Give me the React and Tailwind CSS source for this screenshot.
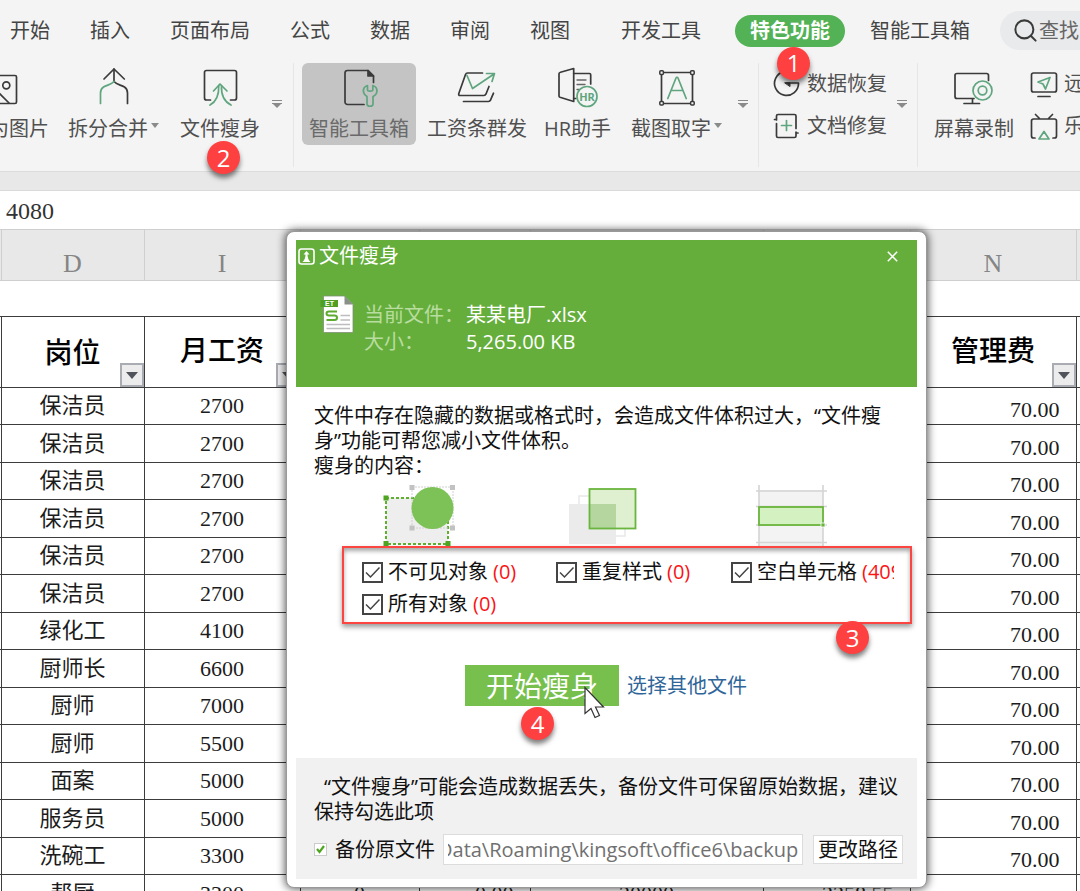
import React, { useLayoutEffect, useRef } from "react";
import { Search } from "lucide-react";

const INK = "#3a3a3a";
const GREEN = "#5fa57e";

function Icon({ size = 48, children }) {
  return (
    <svg
      width={size}
      height={size}
      viewBox={`0 0 ${size} ${size}`}
      fill="none"
      stroke={INK}
      strokeWidth="1.7"
      strokeLinecap="round"
      strokeLinejoin="round"
      aria-hidden="true"
      className="shrink-0"
    >
      {children}
    </svg>
  );
}

const PictureIcon = () => (
  <Icon>
    <rect x="8.5" y="11.5" width="33" height="28" rx="1.5" />
    <circle cx="31.3" cy="21.3" r="3.5" />
    <path d="M9 36 19 24 34 39" />
  </Icon>
);

const SplitIcon = () => (
  <Icon>
    <path d="M24 5v12.5c3 3.500 7 3.200 10.500 5.500 2 1.400 3 3.300 3 6V39.500" />
    <path d="M14 15 24 5l10.300 10" />
    <path d="M24 17.500c-3 3.500-7 3.200-10.500 5.500-2 1.400-3 3.300-3 6V39.500" stroke={GREEN} />
  </Icon>
);

const SlimIcon = () => (
  <Icon>
    <path d="M14.500 36H10.500a2 2 0 0 1-2-2V8.500a2 2 0 0 1 2-2h28a2 2 0 0 1 2 2V34a2 2 0 0 1-2 2H34.500" />
    <g stroke={GREEN}>
      <path d="M17.500 27 24 20l7 7" />
      <path d="M22.800 21.500C23 31 20 38 14 41M25.500 21.500C25 31 29 38 35 41" />
    </g>
  </Icon>
);

const ToolboxIcon = () => (
  <Icon>
    <path d="M29 40.500H12.500a2.500 2.500 0 0 1-2.500-2.500V9a2.500 2.500 0 0 1 2.500-2.500H33l5.500 5.500v6.500" />
    <path d="M33 6.500v5.500h5.500z" fill={INK} />
    <path
      d="M32.500 21.500c-3 1-4.500 3.500-4 6.500.4 2.200 2 3.700 3.500 4.500V40c0 3 6 3 6 0v-7.500c2-.8 3.500-2.300 3.800-4.500.5-3-1-5.500-4-6.500V26c0 1.500-5.300 1.500-5.300 0z"
      stroke={GREEN}
    />
  </Icon>
);

const SendIcon = () => (
  <Icon>
    <path d="M29.500 9H14.500c-1 0-1.600.4-2 1.500L5.800 29.500c-.4 1.200.1 2 1.200 2H31c.9 0 1.500-.4 1.900-1.300L36 22.500" />
    <path d="M10.500 37.500H35.500c1 0 1.600-.4 2-1.300l3-7" />
    <path d="M14 11.500l5.500 13L41 10M33.500 9.500h8l-2.500 8" stroke={GREEN} />
  </Icon>
);

const HrIcon = () => (
  <Icon>
    <path d="M6.500 8.200 19.700 4.500V37.500L6 33.300c-.8-.3-1-.7-1-1.300V9.800c0-.8.5-1.300 1.500-1.600z" />
    <path d="M19.700 9.500H35.500a1.200 1.200 0 0 1 1.200 1.200V20M19.700 34.500h2" />
    <path d="M23 16h9M23 20.500h8M23 25.500h2" strokeWidth="1.300" stroke="#666" />
    <circle cx="33" cy="32.500" r="10" fill="#f4f4f4" stroke={GREEN} />
    <text x="33" y="36.500" textAnchor="middle" fontSize="11" fontWeight="700" fontFamily="Noto Sans, sans-serif" fill={GREEN} stroke="none">
      HR
    </text>
  </Icon>
);

const CaptureIcon = () => (
  <Icon>
    <path d="M11 8.500h26M11 39.500h26M8.500 11v26M39.500 11v26" />
    <g strokeWidth="1.500">
      <rect x="6.800" y="6.800" width="3.600" height="3.600" rx="1" />
      <rect x="37.600" y="6.800" width="3.600" height="3.600" rx="1" />
      <rect x="6.800" y="37.400" width="3.600" height="3.600" rx="1" />
      <rect x="37.600" y="37.400" width="3.600" height="3.600" rx="1" />
    </g>
    <path d="M14.800 34.500 23 14c.4-1 1.600-1 2 0l8.200 20.500M18 26.500h12" stroke={GREEN} />
  </Icon>
);

const RecordIcon = () => (
  <Icon>
    <path d="M24 34.500H7a2 2 0 0 1-2-2v-21a2 2 0 0 1 2-2H36.500a2 2 0 0 1 2 2V16.500M22.500 34.500V39M14 39.500H29.500" />
    <circle cx="32.500" cy="26.500" r="9.500" stroke={GREEN} />
    <circle cx="32.500" cy="26.500" r="4.300" stroke={GREEN} />
  </Icon>
);

const RestoreIcon = () => (
  <Icon size={28}>
    <path d="M21 4A12 12 0 1 0 25.500 13H13" />
    <path d="M12 12.800h5v3.400z" fill={INK} strokeWidth="1" />
  </Icon>
);

const RepairIcon = () => (
  <Icon size={28}>
    <path d="M3.500 8V4a1.500 1.500 0 0 1 1.500-1.500H21.500A1.500 1.500 0 0 1 23 4V16.500M23 20v4a1.500 1.500 0 0 1-1.500 1.500H5A1.500 1.500 0 0 1 3.500 24V11.500M1.500 7.500h2M23 21h2" />
    <path d="M13.500 8.500v10M8.500 13.500h10" stroke={GREEN} />
  </Icon>
);

const RemoteIcon = () => (
  <Icon size={28}>
    <rect x="1.500" y="3" width="25" height="19" rx="2" />
    <path d="M8 26.500h12" />
    <path d="M8 12 20 7.500 15.500 19 13 14z" stroke={GREEN} />
  </Icon>
);

const TvIcon = () => (
  <Icon size={28}>
    <path d="M5 26H3.500a2 2 0 0 1-2-2V9a2 2 0 0 1 2-2h21a2 2 0 0 1 2 2V24a2 2 0 0 1-2 2H23M5.500 2.500 9.500 6.500M22.500 2.500 18.500 6.500" />
    <path d="M14 19.500 19 27H9z" stroke={GREEN} />
  </Icon>
);

function Badge({ n, className }) {
  return (
    <span
      className={`absolute z-20 flex size-[33px] items-center justify-center rounded-full bg-[#ff4040] text-2xl leading-none font-medium text-white shadow-[0_4px_5px_rgba(0,0,0,0.5)] ${className}`}
    >
      {n}
    </span>
  );
}

function Caret() {
  return <span className="mb-2 border-x-[4px] border-t-[5px] border-x-transparent border-t-[#8a8a8a]" />;
}

function GroupMenu({ className }) {
  return (
    <button type="button" aria-label="更多" className={`mt-[37px] flex h-2 shrink-0 flex-col items-center justify-between ${className}`}>
      <span className="h-px w-2.5 bg-[#8a8a8a]" />
      <span className="mt-[2px] h-px w-2.5 bg-[#8a8a8a]" />
      <span className="border-x-[5px] border-t-[5px] border-x-transparent border-t-[#8a8a8a]" />
    </button>
  );
}

function Divider({ className }) {
  return <span className={`h-[104px] w-px shrink-0 bg-[#e6e6e6] ${className}`} />;
}

function RibbonButton({ icon, label, caret, active, className, children }) {
  return (
    <button
      type="button"
      className={`relative flex h-[82px] shrink-0 flex-col items-center rounded-md ${active ? "bg-[#c4c4c4] px-[7px] text-[#6a6a6a]" : ""} ${className}`}
    >
      <span className="flex h-[50px] items-center">{icon}</span>
      <span className="flex items-center gap-[3px] leading-8">
        {label}
        {caret && <Caret />}
      </span>
      {children}
    </button>
  );
}

function SmallButton({ icon, label }) {
  return (
    <button type="button" className="flex h-[42px] items-center gap-1.5">
      {icon}
      {label}
    </button>
  );
}

const tabs = ["开始", "插入", "页面布局", "公式", "数据", "审阅", "视图"];

function Ribbon() {
  return (
    <header className="border-b border-[#dcdcdc] bg-[#f4f4f4] text-xl whitespace-nowrap text-[#505050]">
      <nav className="flex h-[63px] items-center pb-0.5 pl-2.5 text-[#444]">
        <div className="flex shrink-0 gap-10">
          {tabs.map((t) => (
            <button type="button" key={t}>
              {t}
            </button>
          ))}
        </div>
        <button type="button" className="ml-[51px] shrink-0">
          开发工具
        </button>
        <button type="button" className="relative ml-[34px] h-8 shrink-0 rounded-full bg-[#53b156] px-[15px] font-bold text-white">
          特色功能
          <Badge n={1} className="top-[32px] left-[42px]" />
        </button>
        <button type="button" className="ml-[25px] shrink-0">
          智能工具箱
        </button>
        <button type="button" className="ml-[30px] flex h-[39px] min-w-[120px] shrink-0 items-center rounded-full bg-[#e9eaeb] pl-3 text-[#666]">
          <Search size={27} strokeWidth={1.8} color="#3a3a3a" />
          查找
        </button>
      </nav>
      <div className="flex h-[108px] items-start">
        <RibbonButton icon={<PictureIcon />} label="输出为图片" className="-ml-[51px]" />
        <RibbonButton icon={<SplitIcon />} label="拆分合并" caret className="ml-[19px]" />
        <RibbonButton icon={<SlimIcon />} label="文件瘦身" className="ml-[21px]">
          <Badge n={2} className="top-[78px] left-[27px]" />
        </RibbonButton>
        <GroupMenu className="ml-3" />
        <Divider className="ml-[11px]" />
        <RibbonButton icon={<ToolboxIcon />} label="智能工具箱" active className="ml-2" />
        <RibbonButton icon={<SendIcon />} label="工资条群发" className="ml-[11px]" />
        <RibbonButton icon={<HrIcon />} label="HR助手" className="ml-[17px]" />
        <RibbonButton icon={<CaptureIcon />} label="截图取字" caret className="ml-5" />
        <GroupMenu className="ml-4" />
        <Divider className="ml-[10px]" />
        <div className="ml-[14px] shrink-0">
          <SmallButton icon={<RestoreIcon />} label="数据恢复" />
          <SmallButton icon={<RepairIcon />} label="文档修复" />
        </div>
        <GroupMenu className="ml-2.5" />
        <Divider className="ml-[10px]" />
        <RibbonButton icon={<RecordIcon />} label="屏幕录制" className="ml-4" />
        <div className="ml-4 shrink-0">
          <SmallButton icon={<RemoteIcon />} label="远程桌面" />
          <SmallButton icon={<TvIcon />} label="乐播投屏" />
        </div>
      </div>
    </header>
  );
}

const rows = [
  ["保洁员", "2700"],
  ["保洁员", "2700"],
  ["保洁员", "2700"],
  ["保洁员", "2700"],
  ["保洁员", "2700"],
  ["保洁员", "2700"],
  ["绿化工", "4100"],
  ["厨师长", "6600"],
  ["厨师", "7000"],
  ["厨师", "5500"],
  ["面案", "5000"],
  ["服务员", "5000"],
  ["洗碗工", "3300"],
  ["帮厨", "3300", "0", "0.00", "20000", "2258.55"],
];

function FilterButton() {
  return (
    <button
      type="button"
      aria-label="筛选"
      className="absolute right-0 bottom-0 flex size-6 items-center justify-center border-2 border-[#a9adb3] bg-[#ececec]"
    >
      <span className="border-x-[6px] border-t-[7px] border-x-transparent border-t-[#50545a]" />
    </button>
  );
}

function Sheet() {
  const cell = "border border-[#3c3c3c] p-0";
  const letter = "border-x border-b border-[#cfcfcf] p-0 pt-[17px] font-normal";
  return (
    <table className="w-full table-fixed border-collapse font-['Liberation_Serif','Noto_Sans_CJK_SC',serif] text-[22px] leading-7 text-[#1c1c1c]">
      <colgroup>
        <col className="w-px" />
        <col className="w-[143px]" />
        <col className="w-[156px]" />
        <col className="w-[119px]" />
        <col className="w-[111px]" />
        <col className="w-[233px]" />
        <col className="w-[147px]" />
        <col className="w-[166px]" />
        <col />
      </colgroup>
      <thead>
        <tr className="h-[51px] border-t border-[#cfcfcf] bg-[#e8e8e8] text-[26px] text-[#858585]">
          <td className="border-b border-[#cfcfcf] p-0" />
          <th className={letter}>D</th>
          <th className={letter}>I</th>
          <td className={letter} />
          <td className={letter} />
          <td className={letter} />
          <td className={letter} />
          <th className={letter}>N</th>
          <td className="border-b border-[#cfcfcf] p-0" />
        </tr>
        <tr className="h-9">
          <td colSpan={9} className="p-0" />
        </tr>
        <tr className="h-[71px] text-[28px] text-black">
          <td className="border-y border-[#3c3c3c] p-0" />
          <th className={`relative pt-1 font-medium ${cell}`}>
            岗位
            <FilterButton />
          </th>
          <th className={`relative font-medium ${cell}`}>
            月工资
            <FilterButton />
          </th>
          <td className={cell} />
          <td className={cell} />
          <td className={cell} />
          <td className={cell} />
          <th className={`relative font-medium ${cell}`}>
            管理费
            <FilterButton />
          </th>
          <td className="border-y border-[#3c3c3c] p-0" />
        </tr>
      </thead>
      <tbody className="text-center">
        {rows.map(([post, wage, j, k, l, m], i) => (
          <tr key={i} className="odd:h-[37px] even:h-[38px]">
            <td className="border-y border-[#3c3c3c] p-0" />
            <td className={cell}>{post}</td>
            <td className={cell}>{wage}</td>
            <td className={cell}>{j}</td>
            <td className={`${cell} text-right`}>
              <span className="pr-4">{k}</span>
            </td>
            <td className={cell}>{l}</td>
            <td className={`${cell} text-right`}>
              <span className="pr-4">{m}</span>
            </td>
            <td className={`${cell} text-right align-bottom`}>
              <span className="pr-4">70.00</span>
            </td>
            <td className="border-y border-[#3c3c3c] p-0" />
          </tr>
        ))}
      </tbody>
    </table>
  );
}

function CheckItem({ label, count, className = "" }) {
  return (
    <label className={`flex items-center gap-[5px] overflow-hidden ${className}`}>
      <span className="grid shrink-0 place-items-center">
        <input type="checkbox" defaultChecked className="peer col-start-1 row-start-1 size-[21px] appearance-none border-2 border-[#444] bg-white" />
        <svg width="17" height="17" viewBox="0 0 17 17" fill="none" stroke="#444" strokeWidth="1.500" className="pointer-events-none col-start-1 row-start-1 hidden peer-checked:block" aria-hidden="true">
          <path d="M2 8.500 6.500 13 15.500 3.500" />
        </svg>
      </span>
      <span>{label}</span>
      <span className="text-[#fb1414]">({count})</span>
    </label>
  );
}

function ObjectsArt() {
  return (
    <svg width="74" height="62" viewBox="0 0 74 62" aria-hidden="true">
      <rect x="3" y="14" width="62" height="46" fill="#eee" stroke="#5fb02f" strokeWidth="2" strokeDasharray="3 2" />
      <rect x="29" y="3" width="41" height="41" fill="none" stroke="#d0d0d0" strokeDasharray="2 1" />
      <circle cx="49.500" cy="24" r="21" fill="#7dc257" />
      <path d="M26.500 1h5v5h-5zM67 1h5v5h-5zM26.500 41.500h5v5h-5zM67 41.500h5v5h-5z" fill="#c2c2c2" />
      <path d="M.5 11.500h5v5h-5zM.5 57h5v5h-5zM62.500 57h5v5h-5z" fill="#4fa522" />
    </svg>
  );
}

function StylesArt() {
  return (
    <svg width="70" height="62" viewBox="0 0 70 62" aria-hidden="true">
      <rect x="11" y="12" width="46" height="40" fill="none" stroke="#e8e8e8" strokeWidth="1.500" />
      <rect x="1" y="20" width="47" height="40" fill="#ebebeb" />
      <rect x="21.500" y="5" width="46" height="39.500" fill="#dff0d0" />
      <path d="M21.500 20H48V44.500H21.500z" fill="#b5d79f" />
      <rect x="21.500" y="5" width="46" height="39.500" fill="none" stroke="#6ab53e" strokeWidth="1.800" />
    </svg>
  );
}

function CellsArt() {
  return (
    <svg width="72" height="62" viewBox="0 0 72 62" aria-hidden="true">
      <path d="M4 6h64v56H4z" fill="#f3f3f3" />
      <path d="M4 1v61M68 1v61M1 7h71M1 58.500h71M1 22.500h71M1 41h71" stroke="#d4d4d4" strokeWidth="1.600" fill="none" />
      <rect x="4" y="23" width="64" height="18" fill="#d3f1c1" stroke="#6ab53e" strokeWidth="1.800" />
      <path d="M66 39h4v4h-4z" fill="#6ab53e" stroke="#fff" strokeWidth=".8" />
    </svg>
  );
}

function SlimDialog() {
  const pathRef = useRef(null);
  useLayoutEffect(() => {
    const el = pathRef.current;
    el.scrollLeft = el.scrollWidth;
  }, []);

  return (
    <section
      role="dialog"
      aria-labelledby="slim-title"
      className="absolute top-[231px] left-[286px] z-10 w-[641px] rounded-lg border border-[#999] bg-white px-[9px] py-2 text-xl text-[#111] shadow-[0_0_8px_1px_rgba(0,0,0,0.65)]"
    >
      <div className="h-[147px] bg-[#65ae3b] text-white">
        <div className="flex h-8 items-center pl-[2px]">
          <svg width="17" height="17" viewBox="0 0 17 17" fill="none" aria-hidden="true">
            <rect x="1" y="1" width="15" height="15" rx="2.500" stroke="#fff" strokeWidth="1.600" />
            <path d="M8.500 3 11.500 6.500H9.500c0 3 1 5.500 3 7.500h-8c2-2 3-4.500 3-7.500H5.500z" fill="#fff" />
          </svg>
          <h2 id="slim-title" className="ml-1">
            文件瘦身
          </h2>
          <button type="button" aria-label="关闭" className="mr-[19px] ml-auto">
            <svg width="11" height="11" viewBox="0 0 11 11" stroke="#fff" strokeWidth="1.500" aria-hidden="true">
              <path d="M.8.8l9.400 9.400M10.200.8.8 10.200" />
            </svg>
          </button>
        </div>
        <div className="flex gap-2 pt-[23px] pl-6">
          <svg width="36" height="40" viewBox="0 0 36 40" aria-hidden="true">
            <path d="M3.500 1H24.500L33 9.500V36.500a1 1 0 0 1-1 1H4.500a1 1 0 0 1-1-1z" fill="#fff" stroke="#7d8f74" strokeWidth=".8" />
            <path d="M24.500 1 33 9.500H24.500z" fill="#8b8f8a" />
            <path d="M.5 5H18v7H.5z" fill="#4fa022" />
            <text x="9.500" y="11" textAnchor="middle" fontSize="7" fontWeight="700" fontFamily="Liberation Sans, sans-serif" fill="#fff">
              ET
            </text>
            <path d="M17 16.500H9c-2 0-2.500 1-2.500 2s.7 2 2.500 2h5.500c1.800 0 2.500 1 2.500 2.200s-.7 2.200-2.500 2.200H6.500" fill="none" stroke="#5cab2f" strokeWidth="2" />
            <path d="M20.500 20.500H30M20.500 25H30M6.500 29.500H30M6.500 33.500H30" stroke="#bdbdbd" strokeWidth="1.300" />
          </svg>
          <dl className="grid grid-cols-[102px_1fr] pt-1.5 leading-[27px]">
            <dt className="text-[#b9dda0]">当前文件：</dt>
            <dd>某某电厂.xlsx</dd>
            <dt className="text-[#b9dda0]">大小：</dt>
            <dd>5,265.00 KB</dd>
          </dl>
        </div>
      </div>

      <div className="pt-4 pl-[18px]">
        <p className="leading-[25px] whitespace-nowrap">
          文件中存在隐藏的数据或格式时，会造成文件体积过大，“文件瘦
          <br />
          身”功能可帮您减小文件体积。
          <br />
          瘦身的内容：
        </p>
        <div className="mt-1.5 ml-[69px] flex items-end">
          <ObjectsArt />
          <div className="ml-[111px]">
            <StylesArt />
          </div>
          <div className="ml-[117px]">
            <CellsArt />
          </div>
        </div>
        <div className="relative mr-[5px] ml-7 grid h-[78px] grid-cols-[194px_175px_1fr] content-center border-2 border-[#fb4541] pt-1.5 pr-4 pl-[18px] leading-8 whitespace-nowrap shadow-[0_3px_5px_rgba(0,0,0,0.4),inset_0_3px_4px_rgba(0,0,0,0.35)]">
          <CheckItem label="不可见对象" count="0" />
          <CheckItem label="重复样式" count="0" />
          <CheckItem label="空白单元格" count="409" />
          <CheckItem label="所有对象" count="0" />
          <Badge n={3} className="top-[73px] left-[492px]" />
        </div>
      </div>

      <div className="mt-[41px] mb-[52px] flex items-center gap-2 pl-[169px]">
        <button type="button" className="relative h-[41px] w-[154px] bg-[#78c04d] text-[28px] leading-[43px] text-white">
          开始瘦身
          <Badge n={4} className="top-[42px] left-[56px]" />
          <svg width="24" height="34" viewBox="0 0 24 34" className="absolute top-[21px] left-[118px] z-20" aria-hidden="true">
            <path d="M2 1.500V27.500L8 22.500 12 31.500 16.500 29.500 12.500 21H20.500z" fill="#fff" stroke="#333" strokeWidth="1.200" />
          </svg>
        </button>
        <a href="#other" className="text-[#2f6699]">
          选择其他文件
        </a>
      </div>

      <div className="bg-[#f1f1f1] pt-4 pr-3.5 pb-3.5 pl-[18px]">
        <p className="leading-[25px] whitespace-nowrap">
          <span className="ml-2.5">“文件瘦身”可能会造成数据丢失，备份文件可保留原始数据，建议</span>
          <br />
          保持勾选此项
        </p>
        <div className="mt-2.5 flex items-center">
          <label className="flex shrink-0 items-center gap-2">
            <span className="grid place-items-center">
              <input type="checkbox" defaultChecked className="peer col-start-1 row-start-1 size-[13px] appearance-none border border-[#ccc] bg-white" />
              <svg width="11" height="11" viewBox="0 0 11 11" fill="none" stroke="#4fa522" strokeWidth="2.200" className="pointer-events-none col-start-1 row-start-1 hidden peer-checked:block" aria-hidden="true">
                <path d="M2 5 4.500 8 9 2" />
              </svg>
            </span>
            备份原文件
          </label>
          <input
            ref={pathRef}
            aria-label="备份路径"
            defaultValue="Data\Roaming\kingsoft\office6\backup"
            className="ml-2 h-[31px] min-w-0 flex-1 border border-[#dcdcdc] bg-white px-1 text-[#707070] outline-none"
          />
          <button type="button" className="ml-2.5 h-[29px] w-[90px] shrink-0 border border-[#dcdcdc] bg-white leading-[27px] whitespace-nowrap">
            更改路径
          </button>
        </div>
      </div>
    </section>
  );
}

export default function App() {
  return (
    <main lang="zh-CN" className="relative h-screen overflow-hidden bg-white font-['Open_Sans','Noto_Sans_CJK_SC',sans-serif]">
      <Ribbon />
      <div className="h-[19px] border-b border-[#dadada] bg-[#e8e8e8]" />
      <input
        aria-label="编辑栏"
        defaultValue="4080"
        className="block h-[38px] w-full bg-white px-1.5 pt-0.5 font-['Liberation_Serif',serif] text-2xl text-[#333] outline-none"
      />
      <Sheet />
      <SlimDialog />
    </main>
  );
}
